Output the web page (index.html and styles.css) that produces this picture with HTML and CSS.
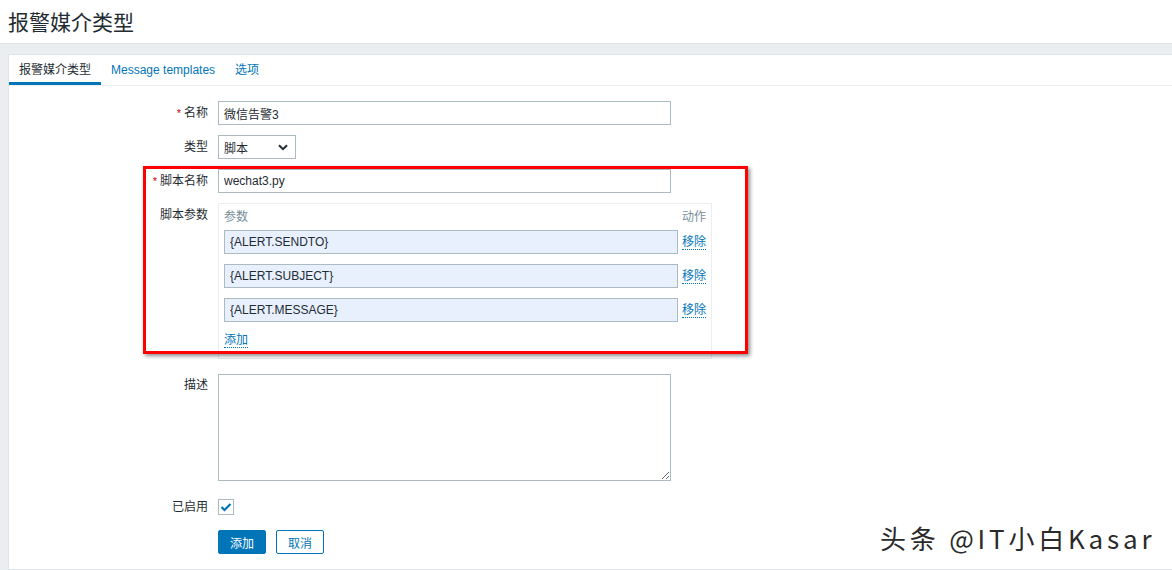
FILE: index.html
```html
<!DOCTYPE html>
<html lang="zh">
<head>
<meta charset="utf-8">
<title>报警媒介类型</title>
<link rel="stylesheet" href="styles.css">
</head>
<body>
<header class="page-header"><h1>报警媒介类型</h1></header>
<main class="wrap">
  <section class="card">
    <nav class="tabs">
      <span class="tab active">报警媒介类型</span>
      <span class="tab">Message templates</span>
      <span class="tab">选项</span>
    </nav>
    <form class="form">
      <label class="lbl"><span class="req">*</span>名称</label>
      <div class="field"><input class="txt wide" type="text" value="微信告警3"></div>

      <label class="lbl">类型</label>
      <div class="field">
        <div class="select"><span>脚本</span>
          <svg class="chev" width="10" height="7" viewBox="0 0 10 7"><path d="M1 1.2 L5 5.2 L9 1.2" fill="none" stroke="#1f2c33" stroke-width="2"/></svg>
        </div>
      </div>

      <label class="lbl"><span class="req">*</span>脚本名称</label>
      <div class="field"><input class="txt wide" type="text" value="wechat3.py"></div>

      <label class="lbl">脚本参数</label>
      <div class="field">
        <div class="params">
          <div class="prow head"><span class="pcol">参数</span><span class="act">动作</span></div>
          <div class="prow"><input class="txt param" type="text" value="{ALERT.SENDTO}"><a class="link act">移除</a></div>
          <div class="prow"><input class="txt param" type="text" value="{ALERT.SUBJECT}"><a class="link act">移除</a></div>
          <div class="prow"><input class="txt param" type="text" value="{ALERT.MESSAGE}"><a class="link act">移除</a></div>
          <div class="prow addrow"><a class="link">添加</a></div>
        </div>
      </div>

      <label class="lbl desc-lbl">描述</label>
      <div class="field"><textarea class="area"></textarea></div>

      <label class="lbl enabled-lbl">已启用</label>
      <div class="field">
        <span class="check"><svg width="12" height="10" viewBox="0 0 12 10"><path d="M1.5 5 L4.5 8 L10.5 2" fill="none" stroke="#0275b8" stroke-width="2.2"/></svg></span>
      </div>

      <span></span>
      <div class="field buttons">
        <button type="button" class="btn primary">添加</button>
        <button type="button" class="btn secondary">取消</button>
      </div>
    </form>
  </section>
</main>
<div class="annot"></div>
<div class="watermark">头条 @IT小白Kasar</div>
</body>
</html>
```

FILE: styles.css
```css
* { box-sizing: border-box; }
html, body { margin: 0; padding: 0; }
body {
  width: 1172px;
  height: 570px;
  overflow: hidden;
  background: #ebeef0;
  font-family: "Liberation Sans", "Noto Sans CJK SC", sans-serif;
  font-size: 12px;
  color: #1f2c33;
  position: relative;
}
.page-header {
  background: #fff;
  height: 44px;
  border-bottom: 1px solid #dfe4e7;
  padding: 0 8px;
}
.page-header h1 {
  margin: 0;
  font-family: "Noto Sans CJK SC", sans-serif;
  font-weight: normal;
  font-size: 21px;
  line-height: 42px;
  color: #1f2c33;
}
.wrap { padding: 10px 0 0 8px; }
.card {
  background: #fff;
  border: 1px solid #dfe4e7;
  border-right: none;
  height: 516px;
}
.tabs {
  display: flex;
  height: 31px;
  border-bottom: 1px solid #ebeef0;
}
.tab {
  padding: 2px 10px 0 10px;
  line-height: 26px;
  color: #0275b8;
  white-space: nowrap;
  border-bottom: 3px solid transparent;
}
.tab.active {
  color: #1f2c33;
  border-bottom-color: #0275b8;
}
.form {
  display: grid;
  grid-template-columns: 199px 1fr;
  column-gap: 10px;
  row-gap: 10px;
  padding-top: 15px;
}
.lbl {
  text-align: right;
  line-height: 24px;
  color: #1f2c33;
}
.req { color: #d40000; margin-right: 3px; font-size: 11px; }
.field { display: flex; align-items: flex-start; }
.txt {
  font-family: "Liberation Sans", "Noto Sans CJK SC", sans-serif;
  font-size: 12px;
  color: #1f2c33;
  height: 24px;
  border: 1px solid #acbbc2;
  background: #fff;
  padding: 0 5px;
  outline: none;
  margin: 0;
}
.wide { width: 453px; }
.select {
  width: 78px;
  height: 24px;
  border: 1px solid #acbbc2;
  display: flex;
  align-items: center;
  justify-content: space-between;
  padding: 0 7px 0 5px;
}
.params {
  width: 494px;
  border: 1px solid #ebeef0;
  padding: 1px 5px 5px 5px;
  height: 156px;
}
.prow {
  display: flex;
  align-items: center;
  justify-content: space-between;
  margin-bottom: 10px;
}
.prow.head { height: 20px; margin-bottom: 5px; color: #768d99; }
.param { width: 454px; background: #e8f0fe; }
.act { width: 24px; text-align: right; }
.link {
  color: #0275b8;
  border-bottom: 1px dotted #0275b8;
  line-height: 14px;
  cursor: pointer;
}
.addrow { justify-content: flex-start; margin: 11px 0 0 0; }
.desc-lbl { line-height: 16px; margin-top: 8px; }
.area {
  width: 453px;
  height: 107px;
  border: 1px solid #acbbc2;
  resize: vertical;
  margin: 5px 0 0 0;
  font-family: inherit;
}
.enabled-lbl { margin-top: 4px; }
.check {
  width: 16px;
  height: 16px;
  border: 1px solid #acbbc2;
  display: flex;
  align-items: center;
  justify-content: center;
  margin-top: 8px;
}
.buttons { gap: 10px; margin-top: 1px; }
.btn {
  font-family: "Noto Sans CJK SC", sans-serif;
  font-size: 12px;
  height: 24px;
  width: 48px;
  padding: 0;
  border-radius: 2px;
  border: 1px solid #0275b8;
}
.primary { background: #0275b8; color: #fff; }
.secondary { background: #fff; color: #0275b8; }
.annot {
  position: absolute;
  left: 143px;
  top: 166px;
  width: 605px;
  height: 188px;
  border: 3px solid #ff0000;
  box-shadow: 2px 2px 4px rgba(0,0,0,0.45);
  pointer-events: none;
}
.watermark {
  position: absolute;
  left: 880px;
  top: 520px;
  font-family: "Noto Sans CJK SC", sans-serif;
  font-size: 26px;
  line-height: 36px;
  color: #2a2a2a;
  letter-spacing: 3.8px;
  white-space: nowrap;
  text-shadow: 0 0 1px #fff;
}
```
